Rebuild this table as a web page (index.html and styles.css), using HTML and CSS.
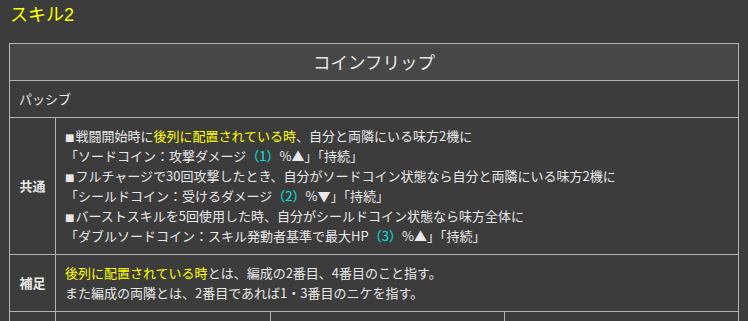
FILE: index.html
```html
<!DOCTYPE html>
<html lang="ja">
<head>
<meta charset="utf-8">
<link rel="stylesheet" href="styles.css">
</head>
<body>
<div class="page">
  <h2 class="skill-title">スキル2</h2>
  <table class="skill-table">
    <tr>
      <th class="head" colspan="4">コインフリップ</th>
    </tr>
    <tr>
      <td class="cell" colspan="4">パッシブ</td>
    </tr>
    <tr>
      <th class="label">共通</th>
      <td class="cell" colspan="3"><span class="sq">■</span>戦闘開始時に<span class="yl">後列に配置されている時</span>、自分と両隣にいる味方2機に<br>「ソードコイン：攻撃ダメージ<span class="cy">（1）</span>%▲」「持続」<br><span class="sq">■</span>フルチャージで30回攻撃したとき、自分がソードコイン状態なら自分と両隣にいる味方2機に<br>「シールドコイン：受けるダメージ<span class="cy">（2）</span>%▼」「持続」<br><span class="sq">■</span>バーストスキルを5回使用した時、自分がシールドコイン状態なら味方全体に<br>「ダブルソードコイン：スキル発動者基準で最大HP<span class="cy">（3）</span>%▲」「持続」</td>
    </tr>
    <tr>
      <th class="label">補足</th>
      <td class="cell" colspan="3"><span class="yl">後列に配置されている時</span>とは、編成の2番目、4番目のこと指す。<br>また編成の両隣とは、2番目であれば1・3番目のニケを指す。</td>
    </tr>
    <tr>
      <td class="cell">&nbsp;</td>
      <td class="cell c2">&nbsp;</td>
      <td class="cell c3">&nbsp;</td>
      <td class="cell">&nbsp;</td>
    </tr>
  </table>
</div>
</body>
</html>
```

FILE: styles.css
```css
html, body {
  margin: 0;
  padding: 0;
  background: #3c3c3c;
  overflow: hidden;
}
body {
  font-family: "Noto Sans CJK JP", "Noto Sans", sans-serif;
  color: #e8e8e8;
}
.page {
  padding: 3px 10px 0 9px;
}
.skill-title {
  margin: 0 0 16px 1px;
  font-family: "Liberation Sans", "Noto Sans CJK JP", sans-serif;
  font-size: 18px;
  line-height: 24px;
  font-weight: normal;
  color: #ffff00;
}
.skill-table {
  width: 730px;
  border-collapse: collapse;
  font-size: 13px;
  line-height: 20px;
}
.skill-table th,
.skill-table td {
  border: 1px solid #b4b4b4;
}
.head {
  background: #474747;
  font-size: 17.5px;
  font-weight: normal;
  line-height: 20px;
  height: 20px;
  padding: 8px 0;
  text-align: center;
}
.cell {
  padding: 8px 9px;
  text-align: left;
  vertical-align: middle;
}
.label {
  width: 27px;
  padding: 8px 9px;
  font-weight: bold;
  text-align: center;
  vertical-align: middle;
}
.sq {
  font-family: "DejaVu Sans", sans-serif;
  font-size: 10px;
  line-height: 10px;
  margin-right: 1px;
}
.c2 { width: 196px; }
.c3 { width: 215px; }
.yl { color: #ffff00; }
.cy { color: #00e6e6; }
```
